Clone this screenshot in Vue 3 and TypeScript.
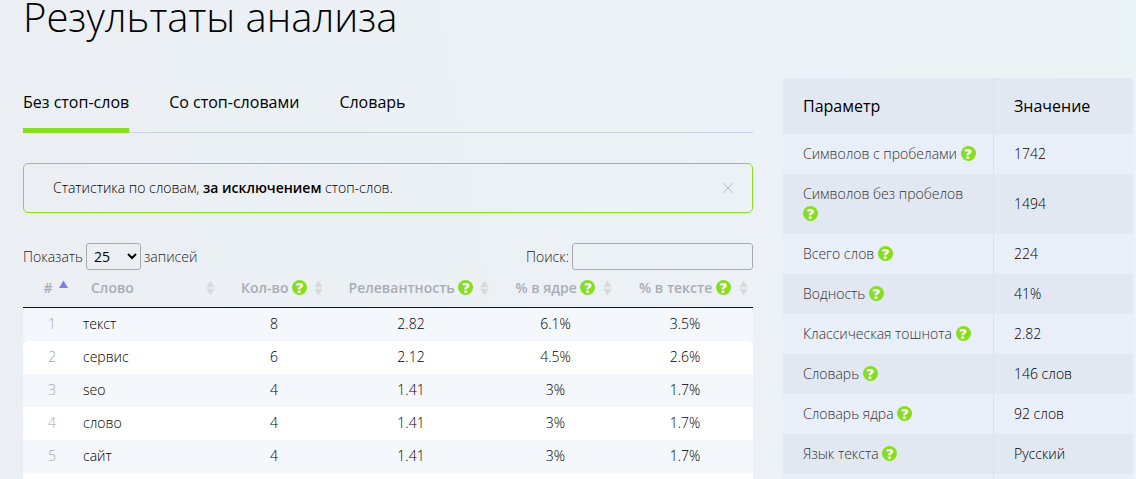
<script setup lang="ts">
import { ref } from 'vue'

interface Column {
  key: string
  label: string
  help: boolean
}

interface WordRow {
  word: string
  count: string
  relevance: string
  core: string
  text: string
}

const tabs: string[] = ['Без стоп-слов', 'Со стоп-словами', 'Словарь']
const activeTab = ref(0)
const noticeOpen = ref(true)
const pageSize = ref('25')
const query = ref('')

const columns: Column[] = [
  { key: 'index', label: '#', help: false },
  { key: 'word', label: 'Слово', help: false },
  { key: 'count', label: 'Кол-во', help: true },
  { key: 'relevance', label: 'Релевантность', help: true },
  { key: 'core', label: '% в ядре', help: true },
  { key: 'text', label: '% в тексте', help: true },
]

const words: WordRow[] = [
  { word: 'текст', count: '8', relevance: '2.82', core: '6.1%', text: '3.5%' },
  { word: 'сервис', count: '6', relevance: '2.12', core: '4.5%', text: '2.6%' },
  { word: 'seo', count: '4', relevance: '1.41', core: '3%', text: '1.7%' },
  { word: 'слово', count: '4', relevance: '1.41', core: '3%', text: '1.7%' },
  { word: 'сайт', count: '4', relevance: '1.41', core: '3%', text: '1.7%' },
]

const params: [string, string][] = [
  ['Символов с пробелами', '1742'],
  ['Символов без пробелов', '1494'],
  ['Всего слов', '224'],
  ['Водность', '41%'],
  ['Классическая тошнота', '2.82'],
  ['Словарь', '146 слов'],
  ['Словарь ядра', '92 слов'],
  ['Язык текста', 'Русский'],
]
</script>

<template>
  <div class="page">
    <h1 class="title">Результаты анализа</h1>
    <div class="layout">
      <main class="main">
        <nav class="tabs">
          <button
            v-for="(tab, i) in tabs"
            :key="tab"
            type="button"
            class="tab"
            :class="{ active: activeTab === i }"
            @click="activeTab = i"
          >{{ tab }}</button>
        </nav>

        <div v-if="noticeOpen" class="notice">
          <p class="notice-text">Статистика по словам, <b>за исключением</b> стоп-слов.</p>
          <button type="button" class="close" @click="noticeOpen = false">
            <svg width="12" height="12" viewBox="0 0 12 12"><path d="M1 1l10 10M11 1L1 11" stroke="#b9bec3" fill="none" /></svg>
          </button>
        </div>

        <div class="controls">
          <label class="control">Показать
            <select v-model="pageSize" class="field size">
              <option>10</option>
              <option>25</option>
              <option>50</option>
              <option>100</option>
            </select>
            записей</label>
          <label class="control">Поиск:
            <input v-model="query" type="search" class="field search" /></label>
        </div>

        <table class="words">
          <colgroup>
            <col v-for="c in columns" :key="c.key" :class="'col-' + c.key" />
          </colgroup>
          <thead>
            <tr>
              <th v-for="c in columns" :key="c.key" :class="'head-' + c.key">
                <div class="head">
                  <span class="head-label">{{ c.label }} <button v-if="c.help" type="button" class="help">?</button></span>
                  <button type="button" class="sort">
                    <svg v-if="c.key === 'index'" width="9" height="16" viewBox="0 0 9 16"><path d="M4.500 0.500L9 8H0z" fill="#7f7fe0" /></svg>
                    <svg v-else width="9" height="16" viewBox="0 0 9 16"><path d="M4.500 0.500L8.700 7.300H.3zM4.500 15.500L8.700 8.700H.3z" fill="#d9dadc" /></svg>
                  </button>
                </div>
              </th>
            </tr>
          </thead>
          <tbody>
            <tr v-for="(w, i) in words" :key="w.word">
              <td class="num">{{ i + 1 }}</td>
              <td class="word">{{ w.word }}</td>
              <td>{{ w.count }}</td>
              <td>{{ w.relevance }}</td>
              <td>{{ w.core }}</td>
              <td>{{ w.text }}</td>
            </tr>
            <tr><td colspan="6"></td></tr>
          </tbody>
        </table>
      </main>

      <aside class="side">
        <table class="params">
          <thead>
            <tr><th>Параметр</th><th>Значение</th></tr>
          </thead>
          <tbody>
            <tr v-for="[name, value] in params" :key="name">
              <td class="param-name">{{ name }} <button type="button" class="help">?</button></td>
              <td>{{ value }}</td>
            </tr>
            <tr><td></td><td></td></tr>
          </tbody>
        </table>
      </aside>
    </div>
  </div>
</template>

<style>
body {
  margin: 0;
  overflow: hidden;
}
</style>

<style scoped>
.page {
  box-sizing: border-box;
  height: 100vh;
  overflow: hidden;
  padding: 0 3px 0 23px;
  background: linear-gradient(80deg, #ebeef3 0%, #ebf0f5 20%, #ecf1f6 60%, #eaf3f6 100%);
  color: #000;
  font-family: "Open Sans", "Noto Sans", sans-serif;
  font-size: 14px;
  font-weight: 300;
  line-height: 20px;
}
button {
  border: 0;
  padding: 0;
  background: none;
  font: inherit;
  color: inherit;
  cursor: pointer;
}
.title {
  margin: 0;
  height: 78px;
  font-size: 40px;
  font-weight: 300;
  line-height: 33px;
}
.layout {
  display: grid;
  grid-template-columns: minmax(0, 1fr) 350px;
  gap: 30px;
  align-items: start;
}
.tabs {
  display: flex;
  gap: 40px;
  box-shadow: inset 0 -1px #cbd4e4;
}
.tab {
  padding: 14px 0 15px;
  border-bottom: 5px solid transparent;
  font-size: 16px;
  font-weight: 500;
  line-height: 21px;
}
.tab.active {
  border-color: #88dd22;
}
.notice {
  display: flex;
  align-items: center;
  justify-content: space-between;
  margin-top: 30px;
  padding: 14px 18px 14px 29px;
  border: 1px solid #88dd22;
  border-radius: 5px;
}
.notice-text {
  margin: 0;
}
.notice-text b {
  font-weight: 600;
}
.close {
  display: flex;
}
.controls {
  display: flex;
  justify-content: space-between;
  margin-top: 30px;
}
.control {
  display: flex;
  align-items: center;
  gap: 3px;
  color: #222;
}
.field {
  box-sizing: border-box;
  height: 27px;
  border: 1px solid #aaa;
  border-radius: 3px;
  background: transparent;
  color: #000;
  font: inherit;
  font-weight: 400;
}
.size {
  width: 55px;
  padding: 0 0 0 3px;
}
.search {
  width: 181px;
  padding: 4px;
}
table {
  width: 100%;
  table-layout: fixed;
  border-collapse: separate;
  border-spacing: 0;
}
.col-index { width: 50px; }
.col-word { width: 147px; }
.col-count { width: 108px; }
.col-relevance { width: 166px; }
.col-core { width: 123px; }
.col-text { width: 136px; }
.words th {
  padding: 8px 5px 9px;
  border-bottom: 1px solid #111;
  color: #a9adb3;
  font-weight: 550;
}
.head {
  display: flex;
  align-items: center;
  padding-left: 9px;
}
.head-label {
  flex: 1;
  white-space: nowrap;
}
.head-word .head {
  padding-left: 13px;
  text-align: left;
}
.sort {
  display: flex;
}
.help {
  display: inline-block;
  width: 15px;
  height: 15px;
  border-radius: 50%;
  background: #88dd22;
  color: #fff;
  font-size: 14px;
  font-weight: 800;
  line-height: 15px;
  text-align: center;
}
.words td {
  height: 20px;
  padding: 6px 10px 7px;
  background: #fff;
  font-weight: 350;
  text-align: center;
}
.words tbody tr:nth-child(odd) td {
  background: #f4f7fc;
}
.words tbody tr:nth-child(2) td:first-child {
  border-top-left-radius: 5px;
}
.words tbody tr:nth-child(2) td:last-child {
  border-top-right-radius: 5px;
}
.words .num {
  padding-right: 17px;
  color: #a5a8ac;
  font-weight: 300;
  text-align: right;
}
.words .word {
  text-align: left;
}
.params {
  overflow: hidden;
  border-radius: 5px;
}
.params th {
  padding: 18px 20px;
  background: #e1e8f2;
  font-size: 16px;
  font-weight: 500;
  text-align: left;
}
.params th:first-child {
  width: 170px;
}
.params td {
  height: 20px;
  padding: 10px 20px;
  background: #e1e8f2;
  font-weight: 350;
}
.params tbody tr:nth-child(odd) td {
  background: #e8eff8;
}
.params .param-name {
  padding-right: 15px;
  color: #333;
  font-weight: 300;
}
.params th + th,
.params td + td {
  border-left: 1px solid #d9e2ee;
}
</style>
